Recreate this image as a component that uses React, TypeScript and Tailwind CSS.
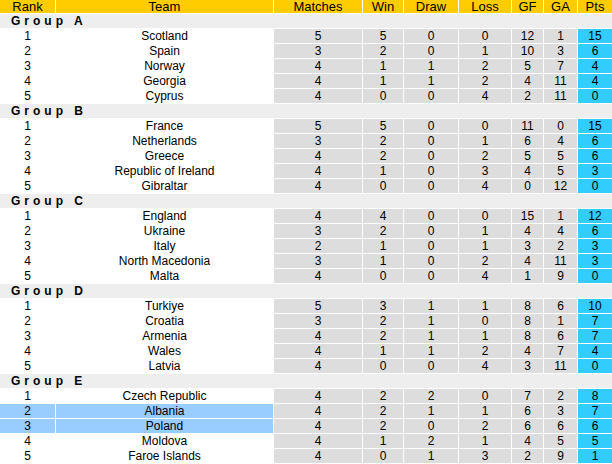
type Row = [number, string, number, number, number, number, number, number, number];

const groups: { name: string; rows: Row[] }[] = [
  {
    name: "Group A",
    rows: [
      [1, "Scotland", 5, 5, 0, 0, 12, 1, 15],
      [2, "Spain", 3, 2, 0, 1, 10, 3, 6],
      [3, "Norway", 4, 1, 1, 2, 5, 7, 4],
      [4, "Georgia", 4, 1, 1, 2, 4, 11, 4],
      [5, "Cyprus", 4, 0, 0, 4, 2, 11, 0],
    ],
  },
  {
    name: "Group B",
    rows: [
      [1, "France", 5, 5, 0, 0, 11, 0, 15],
      [2, "Netherlands", 3, 2, 0, 1, 6, 4, 6],
      [3, "Greece", 4, 2, 0, 2, 5, 5, 6],
      [4, "Republic of Ireland", 4, 1, 0, 3, 4, 5, 3],
      [5, "Gibraltar", 4, 0, 0, 4, 0, 12, 0],
    ],
  },
  {
    name: "Group C",
    rows: [
      [1, "England", 4, 4, 0, 0, 15, 1, 12],
      [2, "Ukraine", 3, 2, 0, 1, 4, 4, 6],
      [3, "Italy", 2, 1, 0, 1, 3, 2, 3],
      [4, "North Macedonia", 3, 1, 0, 2, 4, 11, 3],
      [5, "Malta", 4, 0, 0, 4, 1, 9, 0],
    ],
  },
  {
    name: "Group D",
    rows: [
      [1, "Turkiye", 5, 3, 1, 1, 8, 6, 10],
      [2, "Croatia", 3, 2, 1, 0, 8, 1, 7],
      [3, "Armenia", 4, 2, 1, 1, 8, 6, 7],
      [4, "Wales", 4, 1, 1, 2, 4, 7, 4],
      [5, "Latvia", 4, 0, 0, 4, 3, 11, 0],
    ],
  },
  {
    name: "Group E",
    rows: [
      [1, "Czech Republic", 4, 2, 2, 0, 7, 2, 8],
      [2, "Albania", 4, 2, 1, 1, 6, 3, 7],
      [3, "Poland", 4, 2, 0, 2, 6, 6, 6],
      [4, "Moldova", 4, 1, 2, 1, 4, 5, 5],
      [5, "Faroe Islands", 4, 0, 1, 3, 2, 9, 1],
    ],
  },
];

const highlighted = ["Albania", "Poland"];
const headers = ["Rank", "Team", "Matches", "Win", "Draw", "Loss", "GF", "GA", "Pts"];

export default function App() {
  return (
    <div className="w-[612px] bg-white font-['Liberation_Sans',Arial,sans-serif] text-[12px] leading-[14px] text-black">
      <div className="grid grid-cols-[55px_217px_88px_40px_54px_52px_31px_33px_34px] gap-px">
        {headers.map((h) => (
          <div key={h} className="flex h-[13px] items-center justify-center bg-[#ffcc00] text-[13px] leading-[13px]">
            {h}
          </div>
        ))}
        {groups.map((g) => (
          <div key={g.name} className="col-span-9 grid grid-cols-subgrid gap-px">
            <div className="col-span-9 h-[14px] bg-[#eeeeee] pl-[11px] font-bold tracking-[4px]">{g.name}</div>
            {g.rows.map(([rank, team, ...stats]) => {
              const hi = highlighted.includes(team);
              return (
                <div key={team} className="col-span-9 grid h-[14px] grid-cols-subgrid gap-px text-center">
                  <div className={hi ? "bg-[#99ccff]" : "bg-white"}>{rank}</div>
                  <div className={hi ? "bg-[#99ccff]" : "bg-white"}>{team}</div>
                  {stats.map((v, i) => (
                    <div key={i} className={i === 6 ? "bg-[#33ccff]" : "bg-[#dddddd]"}>
                      {v}
                    </div>
                  ))}
                </div>
              );
            })}
          </div>
        ))}
      </div>
    </div>
  );
}
